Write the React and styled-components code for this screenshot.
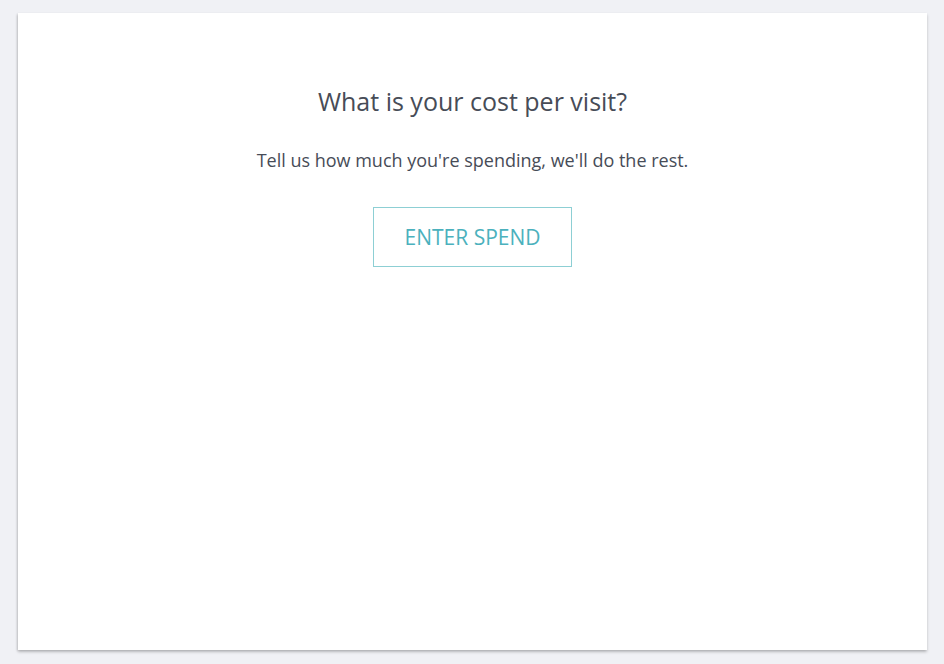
import React from 'react'
import styled, { createGlobalStyle } from 'styled-components'

const GlobalStyle = createGlobalStyle`
  html, body {
    margin: 0;
    padding: 0;
    background: #f0f1f5;
    font-family: "Open Sans", "Liberation Sans", sans-serif;
  }
`

const Page = styled.div`
  padding: 13px 17px 14px 18px;
  box-sizing: border-box;
  height: 664px;
`

const Card = styled.div`
  background: #fff;
  height: 100%;
  box-shadow: -1px 1px 2px rgba(0, 0, 0, 0.12), 0 2px 3px rgba(0, 0, 0, 0.2);
  display: flex;
  flex-direction: column;
  align-items: center;
  padding-top: 71px;
  box-sizing: border-box;
`

const Title = styled.h2`
  margin: 0;
  font-size: 25px;
  font-weight: 400;
  color: #474c57;
  line-height: 34px;
`

const Subtitle = styled.p`
  margin: 30px 0 0;
  font-size: 18px;
  color: #474c57;
  line-height: 24px;
`

const OutlineButton = styled.button`
  margin-top: 35px;
  width: 199px;
  height: 60px;
  padding: 0;
  background: #fff;
  border: 1px solid #8dcfd4;
  color: #4bb1bd;
  font-family: inherit;
  font-size: 21px;
  text-transform: uppercase;
  cursor: pointer;
`

export default function App() {
  return (
    <>
      <GlobalStyle />
      <Page>
        <Card>
          <Title>What is your cost per visit?</Title>
          <Subtitle>Tell us how much you're spending, we'll do the rest.</Subtitle>
          <OutlineButton>Enter spend</OutlineButton>
        </Card>
      </Page>
    </>
  )
}
